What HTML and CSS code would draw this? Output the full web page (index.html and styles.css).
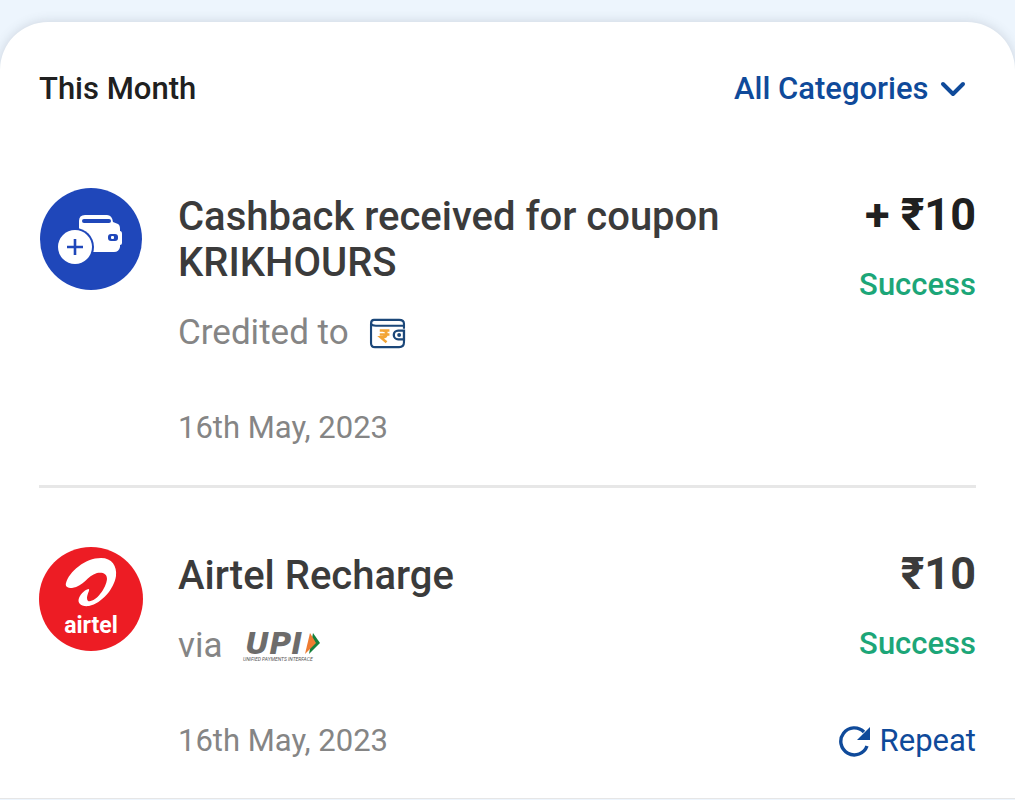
FILE: index.html
```
<!DOCTYPE html>
<html lang="en">
<head>
  <meta charset="UTF-8" />
  <meta name="viewport" content="width=device-width, initial-scale=1.0"/>
  <title>Payment History</title>
  <link rel="stylesheet" href="styles.css">
</head>
<body>

  <main class="history-card">
    <header class="history-header">
      <h1 class="month">This Month</h1>
      <div class="category-box">
        <select class="category-select" aria-label="Category">
          <option>All Categories</option>
          <option>Cashback</option>
          <option>Recharge</option>
        </select>
        <svg class="chevron" viewBox="0 0 26 18" aria-hidden="true">
          <path d="M3 4l10 10L23 4" fill="none" stroke="#0f4a9a" stroke-width="4" stroke-linecap="round" stroke-linejoin="round"/>
        </svg>
      </div>
    </header>

    <section class="payment">
      <svg class="payment-icon" viewBox="0 0 104 104" role="img" aria-label="Cashback">
        <circle cx="52" cy="51" r="51" fill="#1f47ba"/>
        <path d="M46 27H68Q73 27 74 34L79 36Q81 37 81 41V43Q83 43 83 46V55Q83 57 81 57V59Q80 64 75 64H40V33Q40 27 46 27Z" fill="#fff"/>
        <rect x="43" y="31" width="29" height="4" rx="2" fill="#1f47ba"/>
        <rect x="69" y="46" width="10" height="7" rx="3" fill="#1f47ba"/>
        <rect x="72" y="48" width="3" height="3" rx="1" fill="#fff"/>
        <circle cx="36" cy="59" r="19" fill="#1f47ba"/>
        <circle cx="36" cy="59" r="17" fill="#fff"/>
        <path d="M36 51v16M28 59h16" stroke="#1f47ba" stroke-width="2.6"/>
      </svg>
      <div class="details">
        <h2 class="title">Cashback received for coupon KRIKHOURS</h2>
        <div class="method">
          <span>Credited to</span>
          <svg class="wallet-icon" viewBox="0 0 38 32" role="img" aria-label="Wallet">
            <path d="M36 11V6Q36 2 31 2H5Q2 2 2 6V26Q2 30 6 30H31Q36 30 36 25V22M2 6Q3 8 7 8H36" fill="none" stroke="#1b4779" stroke-width="2.2"/>
            <path d="M36 13H30a4.500 4.500 0 0 0 0 9H36Z" fill="#fff" stroke="#1b4779" stroke-width="2.4"/>
            <circle cx="31" cy="17.500" r="2" fill="#1b4779"/>
            <path d="M11 13h10M11 17h10M11 13h3q4 0 4 3.500t-4 3.500h-2l6 5" fill="none" stroke="#f3a536" stroke-width="2.6"/>
          </svg>
        </div>
        <time class="date" datetime="2023-05-16">16th May, 2023</time>
      </div>
      <div class="summary">
        <div class="amount received">+ ₹10</div>
        <div class="status">Success</div>
      </div>
    </section>

    <section class="payment">
      <svg class="payment-icon" viewBox="0 0 104 104" role="img" aria-label="Airtel">
        <circle cx="52" cy="52" r="52" fill="#ed1c24"/>
        <path d="M27 36C30 25 46 11 62 11C73 11 78 19 77 29C75 42 63 56 50 59C42 60 38 56 40 51C42 46 47 42 50 42C51 44 46 50 49 54C56 56 67 42 68 32C68 26 63 25 58 26C48 29 45 39 33 41C28 41 26 39 27 36Z" fill="#fff"/>
        <text x="52" y="86" text-anchor="middle" class="airtel-name">airtel</text>
      </svg>
      <div class="details">
        <h2 class="title">Airtel Recharge</h2>
        <div class="method">
          <span>via</span>
          <svg class="upi-logo" viewBox="0 0 80 32" role="img" aria-label="UPI">
            <text x="2" y="24" class="upi-name">UPI</text>
            <path d="M70 3L77 13L66 24Z" fill="#15803c"/>
            <path d="M67 3L73 13L62 24Z" fill="#ee7b31"/>
            <text x="0" y="31" class="upi-caption">UNIFIED PAYMENTS INTERFACE</text>
          </svg>
        </div>
        <time class="date" datetime="2023-05-16">16th May, 2023</time>
      </div>
      <div class="summary">
        <div class="amount">₹10</div>
        <div class="status">Success</div>
        <button class="repeat-btn" type="button">
          <svg class="repeat-icon" viewBox="0 0 32 32" aria-hidden="true">
            <path d="M28 21A13.500 13.500 0 1 1 25 7" fill="none" stroke="#0f4a9a" stroke-width="3.400"/>
            <path d="M31 2V15H18Z" fill="#0f4a9a"/>
          </svg>
          Repeat
        </button>
      </div>
    </section>
  </main>

</body>
</html>
```
FILE: styles.css
```
* {
  margin: 0;
  padding: 0;
  box-sizing: border-box;
  font-family: Roboto, sans-serif;
}

body {
  background-color: #edf5fd;
  padding-top: 22px;
}

.history-card {
  background-color: #fff;
  border-radius: 48px 48px 0 0;
  border-bottom: 1px solid #e6e6e6;
  box-shadow: 0 0 12px rgba(70, 80, 95, 0.2);
  padding: 0 39px;
}

.history-header {
  display: flex;
  justify-content: space-between;
  align-items: center;
  height: 107px;
  padding: 26px 10px 0 0;
}

.month {
  font-size: 31px;
  line-height: 36px;
  font-weight: 500;
  color: #202020;
}

.category-box {
  display: flex;
  align-items: center;
  position: relative;
}

.category-select {
  appearance: none;
  border: none;
  background: transparent;
  padding-right: 37px;
  font-size: 31px;
  line-height: 36px;
  font-weight: 500;
  color: #0f4a9a;
  cursor: pointer;
}

.chevron {
  position: absolute;
  right: 0;
  width: 26px;
  height: 18px;
  pointer-events: none;
}

.payment {
  display: flex;
  padding: 59px 0 39px;
}

.payment + .payment {
  border-top: 3px solid #e7e7e7;
}

.payment-icon {
  flex: none;
  width: 104px;
  height: 104px;
}

.details {
  flex: 1;
  padding: 6px 24px 0 35px;
}

.title {
  font-size: 40px;
  line-height: 46px;
  font-weight: 500;
  color: #3b3b3b;
}

.method {
  display: flex;
  align-items: center;
  gap: 20px;
  margin: 27px 0 57px;
  font-size: 35px;
  line-height: 40px;
  color: #858585;
}

.wallet-icon {
  width: 37px;
  height: 31px;
}

.upi-logo {
  width: 80px;
  height: 32px;
  overflow: visible;
}

.date {
  display: block;
  font-size: 31px;
  line-height: 36px;
  color: #858585;
}

.summary {
  display: flex;
  flex-direction: column;
  align-items: flex-end;
  padding-top: 1px;
}

.amount {
  font-size: 45px;
  line-height: 52px;
  font-weight: 700;
  color: #3b3b3b;
}

.received {
  color: #202020;
}

.status {
  margin-top: 26px;
  font-size: 31px;
  line-height: 36px;
  font-weight: 500;
  color: #1ca678;
}

.repeat-btn {
  display: flex;
  align-items: center;
  gap: 9px;
  margin-top: auto;
  border: none;
  background: transparent;
  font-size: 31px;
  line-height: 36px;
  color: #0f4a9a;
  cursor: pointer;
}

.repeat-icon {
  width: 32px;
  height: 32px;
}

.airtel-name {
  font-size: 23px;
  font-weight: 700;
  fill: #fff;
}

.upi-name {
  font-family: "DejaVu Sans", sans-serif;
  font-size: 30px;
  font-weight: 700;
  font-style: italic;
  fill: #6d6c6b;
}

.upi-caption {
  font-size: 5px;
  font-style: italic;
  fill: #555;
}
```
